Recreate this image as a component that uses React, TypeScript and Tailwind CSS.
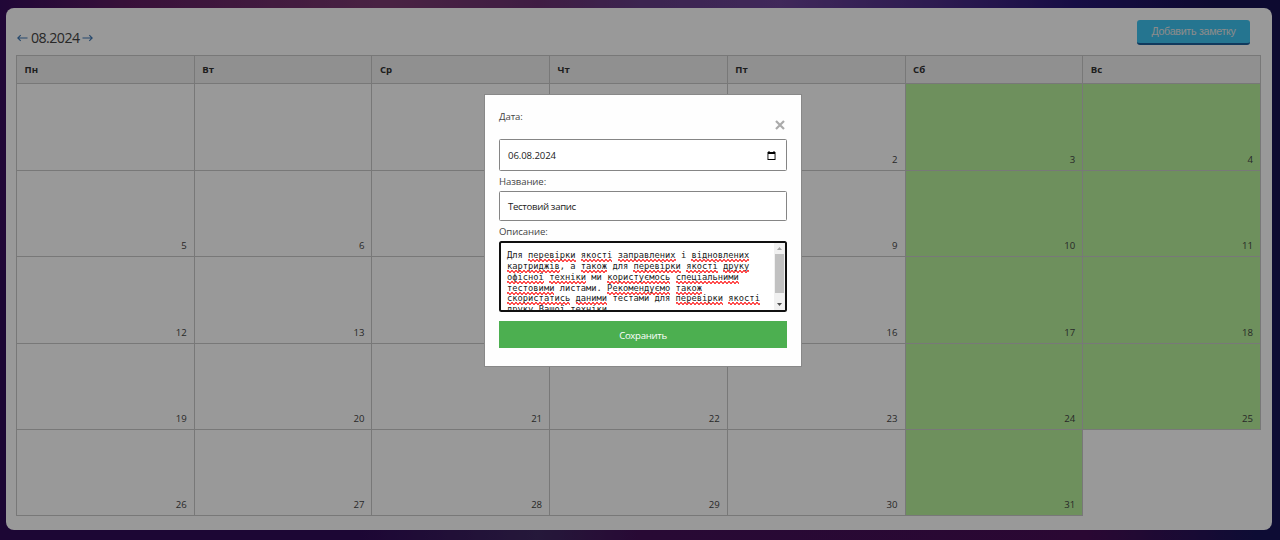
import React from "react";

const DAYS = ["Пн", "Вт", "Ср", "Чт", "Пт", "Сб", "Вс"];
const WEEKS: (number | null)[][] = [
  [null, null, null, 1, 2, 3, 4],
  [5, 6, 7, 8, 9, 10, 11],
  [12, 13, 14, 15, 16, 17, 18],
  [19, 20, 21, 22, 23, 24, 25],
  [26, 27, 28, 29, 30, 31],
];

// Words wrapped in underscores are flagged by the spell checker.
const LINES = [
  "Для _перевірки_ _якості_ _заправлених_ і _відновлених_",
  "_картриджів_, а _також_ для _перевірки_ _якості_ _друку_",
  "_офісної_ _техніки_ ми _користуємось_ _спеціальними_",
  "_тестовими_ листами. _Рекомендуємо_ _також_",
  "_скористатись_ _даними_ тестами для _перевірки_ _якості_",
  "_друку_ _Вашої_ _техніки_.",
];

function SpellLine({ text }: { text: string }) {
  return (
    <div className="whitespace-pre">
      {text.split("_").map((part, i) =>
        i % 2 ? (
          <span key={i} className="bg-[linear-gradient(45deg,transparent_36%,#ff4040_44%,#ff4040_56%,transparent_64%),linear-gradient(-45deg,transparent_36%,#ff4040_44%,#ff4040_56%,transparent_64%)] bg-[length:4px_3px,4px_3px] bg-[position:0_100%,2px_100%] bg-repeat-x pb-[2px]">{part}</span>
        ) : (
          <span key={i}>{part}</span>
        )
      )}
    </div>
  );
}

function Arrow({ back }: { back?: boolean }) {
  return (
    <svg width="11" height="9" viewBox="0 0 11 9" fill="none" stroke="#3f78b5" strokeWidth="1.1" className={back ? "-scale-x-100" : ""}>
      <path d="M0.5 4H10.2M7.3 1.1L10.2 4L7.3 6.9" />
    </svg>
  );
}

function Calendar() {
  return (
    <main className="h-[522px] w-[1266px] rounded-[8px] bg-white pl-[10px]">
      <header className="flex h-[46px] justify-between pr-[22px] pt-[12px]">
        <div className="flex h-[36px] items-center gap-[3px] pl-[1px] text-[14.2px] text-[#444]">
          <Arrow back />
          <span className="-mr-[1px] tracking-[-0.55px]">08.2024</span>
          <Arrow />
        </div>
        <button className="h-[25px] w-[113px] rounded-[3px] border-b-2 border-[#1b5f9c] bg-[#3fc4f0] font-['Liberation_Sans',sans-serif] text-[10.7px] leading-none tracking-[-0.3px] text-[#e8e8e8]">Добавить заметку</button>
      </header>
      <table className="mt-[0.6px] w-[1245px] table-fixed border-collapse text-[9.6px] text-[#444]">
        <thead>
          <tr className="h-[28.8px] bg-[#f0f0f0]">
            {DAYS.map((d) => (
              <th key={d} className="border border-[#c8c8c8] px-[7.5px] pt-[1px] text-left font-bold text-[#333]">{d}</th>
            ))}
          </tr>
        </thead>
        <tbody>
          {WEEKS.map((week, r) => (
            <tr key={r} className="h-[86.4px]">
              {week.map((n, c) => (
                <td key={c} className={`border border-[#c8c8c8] px-[7px] pb-[2.5px] text-right align-bottom ${c > 4 ? "bg-[#b7f09b]" : ""}`}>{n}</td>
              ))}
            </tr>
          ))}
        </tbody>
      </table>
    </main>
  );
}

function NoteDialog() {
  return (
    <section className="absolute left-[484px] top-[94px] flex h-[273px] w-[318px] flex-col border border-[#888] bg-[#fefefe] px-[14px] text-[9.6px] leading-[14px] tracking-[-0.1px] text-[#444]">
      <div className="flex h-[44px] justify-between pt-[15px]">
        <label>Дата:</label>
        <button className="mr-[2px] mt-[10px] h-[10px]" aria-label="Закрыть">
          <svg width="10" height="10" viewBox="0 0 10 10" stroke="#aaa" strokeWidth="2.2"><path d="M1 1L9 9M9 1L1 9" /></svg>
        </button>
      </div>
      <div className="flex h-[32px] shrink-0 items-center justify-between rounded-[1.5px] border border-[#858585] bg-white pl-[8px] pr-[10px] text-[#222]">
        <span className="pt-[2px]">06.08.2024</span>
        <svg width="9" height="9" viewBox="0 0 9 9"><path d="M1.5 0H2.5V1H6.5V0H7.5V1H8.5V9H0.5V1H1.5ZM1.4 3V8H7.6V3Z" fill="#000" fillRule="evenodd" /></svg>
      </div>
      <label className="mt-[4px]">Название:</label>
      <div className="mt-[2px] flex h-[30px] shrink-0 items-center rounded-[1.5px] border border-[#858585] bg-white px-[8px] pt-[2px] tracking-[-0.32px] text-[#222]">Тестовий запис</div>
      <label className="mt-[4px]">Описание:</label>
      <div className="mt-[2px] flex h-[71px] shrink-0 overflow-hidden rounded-[2.5px] border-2 border-[#101010] bg-white">
        <div className="flex-1 overflow-hidden pl-[6px] pt-[7.2px] font-['DejaVu_Sans_Mono',monospace] text-[8.75px] leading-[10.8px] tracking-normal text-[#222]">
          {LINES.map((l) => <SpellLine key={l} text={l} />)}
        </div>
        <div className="flex w-[11px] flex-col items-center bg-[#f1f1f1]">
          <svg className="h-[11px] w-[5px] shrink-0" viewBox="0 0 5 11"><path d="M0 7L2.5 4L5 7Z" fill="#a3a3a3" /></svg>
          <div className="h-[39px] w-[9px] shrink-0 bg-[#c1c1c1]" />
          <svg className="mt-auto h-[11px] w-[5px] shrink-0" viewBox="0 0 5 11"><path d="M0 4L2.5 7L5 4Z" fill="#505050" /></svg>
        </div>
      </div>
      <button className="mt-[9px] h-[27px] shrink-0 bg-[#4caf50] pt-[2px] text-[9.6px] tracking-[-0.3px] text-white">Сохранить</button>
    </section>
  );
}

export default function App() {
  return (
    <div className="relative h-[540px] w-[1280px] overflow-hidden bg-[linear-gradient(90deg,#300a58,#300a58_28%,#3e2861_42%,#430f58_50%,#460d55_85%,#171458_98%)] font-['Open_Sans','Noto_Sans',sans-serif]">
      <div className="h-[270px] bg-[linear-gradient(90deg,#360c5c,#5e1c60_10%,#7b3a71_30%,#6a3070_42%,#643c85_50%,#6b4396_61%,#492b85_74%,#261673_84%,#171150_95%)] pl-[6px] pt-[8px]">
        <Calendar />
      </div>
      <div className="absolute inset-0 bg-black/40" />
      <NoteDialog />
    </div>
  );
}
